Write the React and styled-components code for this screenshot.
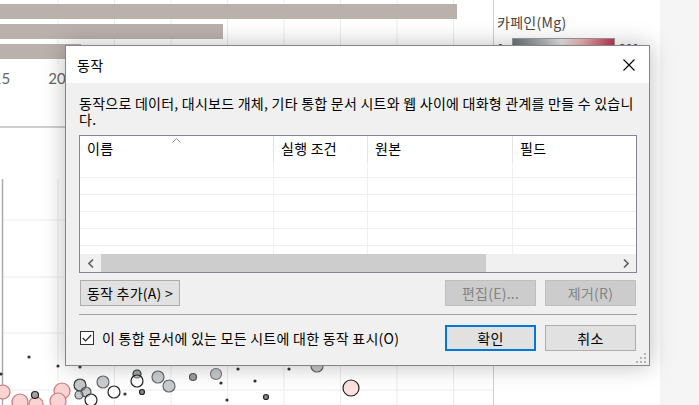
import React from 'react';
import styled, { createGlobalStyle } from 'styled-components';

const GlobalStyle = createGlobalStyle`
  html, body { margin: 0; padding: 0; background: #fff; }
  body { font-family: "Noto Sans CJK KR", "Noto Sans", sans-serif; }
`;

const UI_FONT = `"Noto Sans CJK KR", "Noto Sans", sans-serif`;

const Screen = styled.div`
  position: relative;
  width: 699px;
  height: 405px;
  overflow: hidden;
  display: flex;
  background: #fff;
`;

const MainPane = styled.div`
  width: 493px;
  display: flex;
  flex-direction: column;
`;

const ChartSvg = styled.svg`
  display: block;
  flex: none;
`;

const Divider = styled.div`
  width: 1px;
  background: #cfcfcf;
`;

const LegendPane = styled.div`
  width: 166px;
  padding: 12px 0 0 3px;
  box-sizing: border-box;
  font-family: ${UI_FONT};
`;

const LegendTitle = styled.div`
  font-size: 14px;
  color: #444;
  line-height: 20px;
  letter-spacing: 0.3px;
`;

const RampRow = styled.div`
  display: flex;
  align-items: flex-start;
  margin-top: 6px;
  font-size: 12px;
  color: #555;
  gap: 4px;
`;

const RampLabel = styled.span`
  line-height: 14px;
  margin-top: 3px;
  width: ${p => p.$w}px;
  text-align: ${p => p.$align};
`;

const Ramp = styled.div`
  width: 103px;
  height: 14px;
  box-sizing: border-box;
  border: 1px solid #9a9a9a;
  background: linear-gradient(to right, #6b757c 0%, #a6abae 25%, #e6e6e6 48%, #eab3b3 68%, #d66d7f 86%, #c03656 100%);
`;

const RightStrip = styled.div`
  flex: 1;
  background: #f5f5f5;
`;

/* ---------- dialog ---------- */

const Dialog = styled.div`
  position: absolute;
  left: 65px;
  top: 45px;
  width: 585px;
  height: 321px;
  box-sizing: border-box;
  border: 1px solid #858585;
  background: #f0f0f0;
  box-shadow: 0 0 22px rgba(0, 0, 0, 0.26);
  display: flex;
  flex-direction: column;
  font-family: ${UI_FONT};
  font-size: 14px;
  letter-spacing: 0.25px;
  color: #000;
`;

const TitleBar = styled.div`
  height: 37px;
  flex: none;
  background: #fff;
  display: flex;
  align-items: center;
  justify-content: space-between;
  padding-left: 11px;
`;

const Title = styled.span`
  line-height: 16px;
`;

const CloseButton = styled.div`
  width: 40px;
  height: 37px;
  display: flex;
  align-items: center;
  justify-content: center;
`;

const Body = styled.div`
  flex: 1;
  padding: 12px 12px 0 13px;
  display: flex;
  flex-direction: column;
`;

const Description = styled.div`
  line-height: 16px;
  white-space: nowrap;
`;

const ListBox = styled.div`
  margin-top: 8px;
  height: 138px;
  box-sizing: border-box;
  border: 1px solid #828790;
  background: #fff;
  display: flex;
  flex-direction: column;
`;

const HeaderRow = styled.div`
  height: 26px;
  flex: none;
  display: flex;
`;

const HeaderCell = styled.div`
  position: relative;
  width: ${p => p.$w}px;
  flex: ${p => (p.$grow ? 1 : 'none')};
  box-sizing: border-box;
  border-right: ${p => (p.$grow ? 'none' : '1px solid #e5e5e5')};
  padding: 0 0 2px 7px;
  display: flex;
  align-items: center;
  line-height: 16px;
`;

const SortArrow = styled.svg`
  position: absolute;
  top: 2px;
  left: 92px;
`;

const Rows = styled.div`
  flex: 1;
  overflow: hidden;
`;

const Row = styled.div`
  height: ${p => p.$h}px;
  box-sizing: border-box;
  border-bottom: 1px solid #efefef;
  display: flex;
`;

const Cell = styled.div`
  width: ${p => p.$w}px;
  flex: ${p => (p.$grow ? 1 : 'none')};
  box-sizing: border-box;
  border-right: ${p => (p.$grow ? 'none' : '1px solid #f0f0f0')};
`;

const ScrollBar = styled.div`
  height: 18px;
  flex: none;
  display: flex;
  background: #f0f0f0;
`;

const ScrollArrow = styled.div`
  width: ${p => p.$w}px;
  display: flex;
  align-items: center;
  justify-content: center;
`;

const Track = styled.div`
  flex: 1;
  display: flex;
`;

const Thumb = styled.div`
  width: 385px;
  background: #cdcdcd;
`;

const ButtonRow = styled.div`
  display: flex;
  align-items: center;
  gap: 9px;
  margin-top: 7px;
  padding: 0 1px;
`;

const Spacer = styled.div`
  flex: 1;
`;

const Button = styled.div`
  width: ${p => p.$w}px;
  height: 26px;
  box-sizing: border-box;
  display: flex;
  align-items: center;
  justify-content: center;
  line-height: 16px;
  background: ${p => (p.$disabled ? '#cccccc' : '#e1e1e1')};
  border: ${p => (p.$default ? '2px solid #0078d7' : p.$disabled ? '1px solid #bfbfbf' : '1px solid #adadad')};
  color: ${p => (p.$disabled ? '#838383' : '#000')};
`;

const Separator = styled.div`
  height: 1px;
  background: #a0a0a0;
  margin-top: 8px;
`;

const BottomRow = styled(ButtonRow)`
  margin-top: 10px;
`;

const CheckLabel = styled.label`
  display: flex;
  align-items: center;
  gap: 8px;
  line-height: 16px;
`;

const CheckBox = styled.div`
  width: 14px;
  height: 14px;
  box-sizing: border-box;
  border: 1px solid #333;
  background: #fff;
  display: flex;
  align-items: center;
  justify-content: center;
`;

const Grip = styled.svg`
  position: absolute;
  right: 3px;
  bottom: 2px;
`;

/* ---------- chart data ---------- */

const gridX = [58, 114.5, 171, 227.5, 284, 340.5, 397, 453.5];

const bars = [
  { y: 4, w: 457 },
  { y: 24, w: 223 },
  { y: 44, w: 81 },
];

// absolute page coords; converted to scatter space below
const dots = [
  [29, 357], [58, 366], [80, 367], [1, 374], [125, 394], [221, 383], [227, 400],
  [238, 369], [255, 381], [289, 369],
];

const marks = [
  { x: 62, y: 391, r: 8, fill: '#fbd3d3', stroke: '#c77' },
  { x: 58, y: 401, r: 8, fill: '#fbd3d3', stroke: '#c77' },
  { x: 20, y: 402, r: 8, fill: '#fbd3d3', stroke: '#c77' },
  { x: 36, y: 404, r: 7, fill: '#fbd3d3', stroke: '#c77' },
  { x: 3, y: 392, r: 7, fill: '#fbd3d3', stroke: '#c77' },
  { x: 351, y: 388, r: 8, fill: '#fde1e1', stroke: '#222' },
  { x: 80, y: 385, r: 6, fill: 'rgba(150,156,160,0.55)', stroke: '#333' },
  { x: 86, y: 392, r: 5, fill: 'rgba(150,156,160,0.55)', stroke: '#555' },
  { x: 79, y: 395, r: 4, fill: 'rgba(150,156,160,0.55)', stroke: '#555' },
  { x: 91, y: 400, r: 6, fill: 'rgba(255,255,255,0.6)', stroke: '#222' },
  { x: 103, y: 382, r: 6, fill: 'rgba(150,156,160,0.5)', stroke: '#666' },
  { x: 114, y: 392, r: 6, fill: 'rgba(255,255,255,0.3)', stroke: '#222' },
  { x: 137, y: 374, r: 4, fill: 'rgba(120,126,130,0.7)', stroke: '#333' },
  { x: 137, y: 381, r: 6, fill: 'rgba(255,255,255,0.3)', stroke: '#222' },
  { x: 158, y: 377, r: 6, fill: 'rgba(150,156,160,0.5)', stroke: '#666' },
  { x: 169, y: 386, r: 6, fill: 'rgba(150,156,160,0.5)', stroke: '#666' },
  { x: 35, y: 395, r: 3.5, fill: 'rgba(120,126,130,0.7)', stroke: '#222' },
  { x: 142, y: 392, r: 2.5, fill: '#888', stroke: '#222' },
  { x: 266, y: 397, r: 2.5, fill: '#888', stroke: '#222' },
  { x: 193, y: 377, r: 3.5, fill: 'rgba(130,136,140,0.8)', stroke: '#555' },
  { x: 216, y: 374, r: 5.5, fill: 'rgba(150,156,160,0.55)', stroke: '#777' },
  { x: 317, y: 366, r: 6, fill: 'rgba(150,156,160,0.55)', stroke: '#666' },
];

const SCATTER_TOP = 126;

const TopChart = () => (
  <ChartSvg width="493" height="126">
    {gridX.map(x => (
      <line key={x} x1={x} x2={x} y1="0" y2="64" stroke="#ececec" />
    ))}
    {bars.map(b => (
      <rect key={b.y} x="0" y={b.y} width={b.w} height="15" fill="#bab0ac" />
    ))}
    <text x="1.5" y="84" textAnchor="middle" fontFamily="Lato, sans-serif" fontSize="15" fill="#666">15</text>
    <text x="57" y="84" textAnchor="middle" fontFamily="Lato, sans-serif" fontSize="15" fill="#666">20</text>
  </ChartSvg>
);

const ScatterChart = () => (
  <ChartSvg width="493" height="279">
    <line x1="0" x2="493" y1="1" y2="1" stroke="#cfcfcf" strokeWidth="2" />
    {[94, 151, 207, 264].map(y => (
      <line key={y} x1="2" x2="493" y1={y} y2={y} stroke="#ececec" />
    ))}
    {gridX.map(x => (
      <line key={x} x1={x} x2={x} y1="53" y2="279" stroke="#ececec" />
    ))}
    <line x1="2.5" x2="2.5" y1="53" y2="279" stroke="#ababab" strokeWidth="1.5" />
    {marks.map((m, i) => (
      <circle key={i} cx={m.x} cy={m.y - SCATTER_TOP} r={m.r} fill={m.fill} stroke={m.stroke} strokeWidth="1.2" />
    ))}
    {dots.map(([x, y], i) => (
      <circle key={'d' + i} cx={x} cy={y - SCATTER_TOP} r="1.6" fill="#333" />
    ))}
  </ChartSvg>
);

const columns = [
  { label: '이름', w: 194 },
  { label: '실행 조건', w: 94 },
  { label: '원본', w: 145 },
  { label: '필드', w: 123, grow: true },
];

const rowHeights = [16, 17, 17, 17, 17, 17];

export default function App() {
  return (
    <>
      <GlobalStyle />
      <Screen>
        <MainPane>
          <TopChart />
          <ScatterChart />
        </MainPane>
        <Divider />
        <LegendPane>
          <LegendTitle>카페인(Mg)</LegendTitle>
          <RampRow>
            <RampLabel $w={11} $align="left">0</RampLabel>
            <Ramp />
            <RampLabel $w={30} $align="left">300</RampLabel>
          </RampRow>
        </LegendPane>
        <RightStrip />

        <Dialog>
          <TitleBar>
            <Title>동작</Title>
            <CloseButton>
              <svg width="12" height="12" viewBox="0 0 12 12">
                <path d="M0.5 0.5 L11.5 11.5 M11.5 0.5 L0.5 11.5" stroke="#000" strokeWidth="1.1" fill="none" />
              </svg>
            </CloseButton>
          </TitleBar>
          <Body>
            <Description>
              동작으로 데이터, 대시보드 개체, 기타 통합 문서 시트와 웹 사이에 대화형 관계를 만들 수 있습니
              <br />
              다.
            </Description>
            <ListBox>
              <HeaderRow>
                {columns.map((c, i) => (
                  <HeaderCell key={c.label} $w={c.w} $grow={c.grow}>
                    {c.label}
                    {i === 0 && (
                      <SortArrow width="9" height="5" viewBox="0 0 9 5">
                        <path d="M0.5 4.5 L4.5 0.5 L8.5 4.5" stroke="#8a8a8a" fill="none" />
                      </SortArrow>
                    )}
                  </HeaderCell>
                ))}
              </HeaderRow>
              <Rows>
                {rowHeights.map((h, r) => (
                  <Row key={r} $h={h}>
                    {columns.map(c => (
                      <Cell key={c.label} $w={c.w} $grow={c.grow} />
                    ))}
                  </Row>
                ))}
              </Rows>
              <ScrollBar>
                <ScrollArrow $w={21}>
                  <svg width="6" height="9" viewBox="0 0 6 9">
                    <path d="M5 0.5 L1 4.5 L5 8.5" stroke="#606060" strokeWidth="1.6" fill="none" />
                  </svg>
                </ScrollArrow>
                <Track>
                  <Thumb />
                </Track>
                <ScrollArrow $w={20}>
                  <svg width="6" height="9" viewBox="0 0 6 9">
                    <path d="M1 0.5 L5 4.5 L1 8.5" stroke="#606060" strokeWidth="1.6" fill="none" />
                  </svg>
                </ScrollArrow>
              </ScrollBar>
            </ListBox>

            <ButtonRow>
              <Button $w={100}>동작 추가(A) &gt;</Button>
              <Spacer />
              <Button $w={91} $disabled>편집(E)...</Button>
              <Button $w={91} $disabled>제거(R)</Button>
            </ButtonRow>

            <Separator />

            <BottomRow>
              <CheckLabel>
                <CheckBox>
                  <svg width="10" height="8" viewBox="0 0 10 8">
                    <path d="M0.8 4 L3.6 6.8 L9.2 1" stroke="#222" strokeWidth="1.2" fill="none" />
                  </svg>
                </CheckBox>
                이 통합 문서에 있는 모든 시트에 대한 동작 표시(O)
              </CheckLabel>
              <Spacer />
              <Button $w={91} $default>확인</Button>
              <Button $w={91}>취소</Button>
            </BottomRow>
          </Body>
          <Grip width="10" height="10" viewBox="0 0 10 10">
            {[[8, 0], [8, 4], [4, 4], [8, 8], [4, 8], [0, 8]].map(([x, y]) => (
              <rect key={x + '-' + y} x={x} y={y} width="2" height="2" fill="#b5b5b5" />
            ))}
          </Grip>
        </Dialog>
      </Screen>
    </>
  );
}
